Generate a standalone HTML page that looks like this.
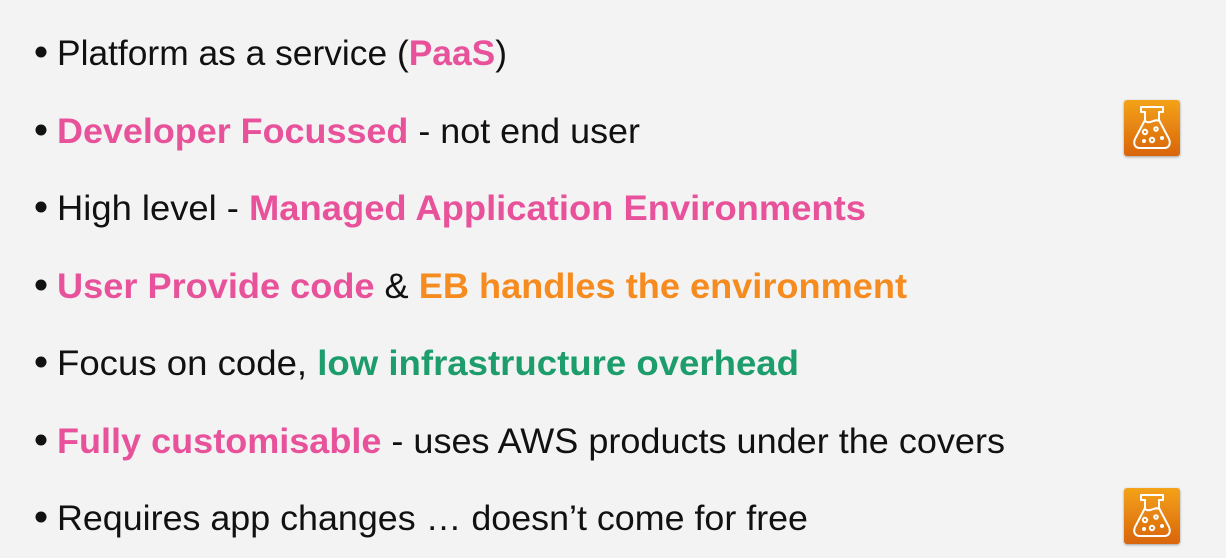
<!DOCTYPE html>
<html><head><meta charset="utf-8"><style>
html,body{margin:0;padding:0;background:#f3f3f3;width:1226px;height:558px;overflow:hidden}
svg{display:block}
text{font-family:"Liberation Sans",sans-serif;font-size:35px;fill:#111}
.p{fill:#e8529b;font-weight:bold}.o{fill:#f68b1f;font-weight:bold}.g{fill:#1d9c6c;font-weight:bold}
</style></head><body>
<svg width="1226" height="558" viewBox="0 0 1226 558">
<defs><linearGradient id="gr" x1="0" y1="0" x2="0" y2="1"><stop offset="0" stop-color="#f3a21a"/><stop offset="1" stop-color="#d9650a"/></linearGradient>
<filter id="sh" x="-20%" y="-20%" width="140%" height="140%"><feDropShadow dx="0" dy="1" stdDeviation="1.2" flood-opacity="0.35"/></filter>
<g id="ic"><rect x="0" y="0" width="56" height="56" rx="3" fill="url(#gr)" filter="url(#sh)"/>
<g fill="none" stroke="#fff" stroke-width="2" stroke-linejoin="round"><path d="M17 7h22v5h-4v8l10 19c2 5 0 9-5 9H16c-5 0-7-4-5-9l10-19v-8h-4z"/><path d="M21 21c5 4 10-3 14 0"/><circle cx="21" cy="32" r="2.2"/><circle cx="28" cy="40" r="2.2"/><circle cx="32" cy="29" r="1.8"/><circle cx="20" cy="41" r="1"/><circle cx="38" cy="38" r="1"/></g></g></defs>
<g fill="#111"><circle cx="41" cy="52" r="5.5"/><circle cx="41" cy="130" r="5.5"/><circle cx="41" cy="207" r="5.5"/><circle cx="41" cy="285" r="5.5"/><circle cx="41" cy="362" r="5.5"/><circle cx="41" cy="440" r="5.5"/><circle cx="41" cy="517" r="5.5"/></g>
<text x="57" y="65" textLength="450" lengthAdjust="spacingAndGlyphs">Platform as a service (<tspan class="p">PaaS</tspan>)</text>
<text x="57" y="143" textLength="583" lengthAdjust="spacingAndGlyphs"><tspan class="p">Developer Focussed</tspan> - not end user</text>
<text x="57" y="220" textLength="809" lengthAdjust="spacingAndGlyphs">High level - <tspan class="p">Managed Application Environments</tspan></text>
<text x="57" y="298" textLength="850" lengthAdjust="spacingAndGlyphs"><tspan class="p">User Provide code</tspan> &amp; <tspan class="o">EB handles the environment</tspan></text>
<text x="57" y="375" textLength="742" lengthAdjust="spacingAndGlyphs">Focus on code, <tspan class="g">low infrastructure overhead</tspan></text>
<text x="57" y="453" textLength="948" lengthAdjust="spacingAndGlyphs"><tspan class="p">Fully customisable</tspan> - uses AWS products under the covers</text>
<text x="57" y="530" textLength="751" lengthAdjust="spacingAndGlyphs">Requires app changes … doesn’t come for free</text>
<use href="#ic" x="1124" y="100"/>
<use href="#ic" x="1124" y="488"/>
</svg>
</body></html>
